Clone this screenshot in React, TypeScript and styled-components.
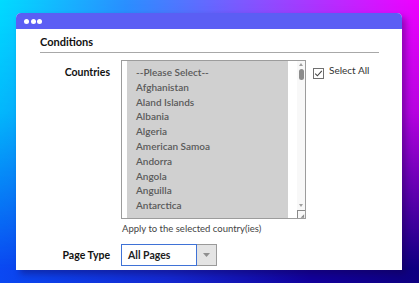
import styled, { createGlobalStyle } from "styled-components";

const GlobalStyle = createGlobalStyle`
    html, body {
        margin: 0;
        padding: 0;
    }
    body {
        font-family: Lato, "Noto Sans", sans-serif;
    }
`

const countries = [
    "--Please Select--",
    "Afghanistan",
    "Aland Islands",
    "Albania",
    "Algeria",
    "American Samoa",
    "Andorra",
    "Angola",
    "Anguilla",
    "Antarctica",
]

function App() {
    return (
        <>
            <GlobalStyle/>
            <Page>
                <Window>
                    <TitleBar>
                        <Dot/>
                        <Dot/>
                        <Dot/>
                    </TitleBar>
                    <Body>
                        <Heading>Conditions</Heading>
                        <Rule/>
                        <FormRow>
                            <Label $top={5}>Countries</Label>
                            <Field>
                                <ListRow>
                                    <ListBox>
                                        <Options>
                                            {countries.map((c) => (
                                                <Option key={c}>{c}</Option>
                                            ))}
                                        </Options>
                                        <ScrollTrack>
                                            <ArrowUp/>
                                            <Thumb/>
                                            <Spacer/>
                                            <ArrowDown/>
                                            <Resize>
                                                <svg width="8" height="8" viewBox="0 0 8 8">
                                                    <path d="M7 3 L7 7 L3 7 Z" fill="#8a8a8a"/>
                                                </svg>
                                            </Resize>
                                        </ScrollTrack>
                                    </ListBox>
                                    <CheckLabel>
                                        <CheckBox>
                                            <svg width="9" height="9" viewBox="0 0 9 9">
                                                <path d="M1.2 4.6 L3.4 6.8 L7.8 1.8" fill="none" stroke="#444" strokeWidth="1.1"/>
                                            </svg>
                                        </CheckBox>
                                        Select All
                                    </CheckLabel>
                                </ListRow>
                                <Help>Apply to the selected country(ies)</Help>
                            </Field>
                        </FormRow>
                        <FormRow $gap={9}>
                            <Label $top={4}>Page Type</Label>
                            <Dropdown>
                                <DropValue>All Pages</DropValue>
                                <DropButton>
                                    <svg width="7" height="4" viewBox="0 0 7 4">
                                        <path d="M0 0 L7 0 L3.5 4 Z" fill="#8f8f8f"/>
                                    </svg>
                                </DropButton>
                            </Dropdown>
                        </FormRow>
                    </Body>
                </Window>
            </Page>
        </>
    )
}

const Page = styled.div`
    position: relative;
    width: 419px;
    height: 283px;
    box-sizing: border-box;
    padding: 13px 17px 13px 16px;
    background: linear-gradient(to right, #0a48f2 0%, #1428d0 40%, #12009a 75%, #0e0080 100%);
    overflow: hidden;

    &::before {
        content: "";
        position: absolute;
        inset: 0;
        background: linear-gradient(to right, #00dcff 0%, #2a90ff 30%, #8a50ff 62%, #f000ff 100%);
        -webkit-mask-image: linear-gradient(to bottom, #000 0%, rgba(0, 0, 0, 0.75) 40%, rgba(0, 0, 0, 0) 95%);
        mask-image: linear-gradient(to bottom, #000 0%, rgba(0, 0, 0, 0.75) 40%, rgba(0, 0, 0, 0) 95%);
    }
`

const Window = styled.div`
    position: relative;
    z-index: 1;
    width: 386px;
    height: 257px;
    background: #fff;
    border-radius: 5px 5px 0 0;
    box-shadow: 4px 4px 6px rgba(20, 0, 60, 0.35);
    display: flex;
    flex-direction: column;
    overflow: hidden;
`

const TitleBar = styled.div`
    height: 16px;
    background: #5b5ef4;
    display: flex;
    align-items: center;
    gap: 1.5px;
    padding-left: 8px;
    padding-top: 1px;
    box-sizing: border-box;
`

const Dot = styled.span`
    width: 5px;
    height: 5px;
    border-radius: 50%;
    background: #fff;
`

const Body = styled.div`
    padding: 6px 23px 0 24px;
    display: flex;
    flex-direction: column;
`

const Heading = styled.div`
    font-size: 11px;
    font-weight: 700;
    color: #111;
    line-height: 14px;
`

const Rule = styled.div`
    height: 1px;
    background: #a8a8a8;
    margin-top: 3px;
    margin-bottom: 7px;
`

const FormRow = styled.div<{ $gap?: number }>`
    display: grid;
    grid-template-columns: 70px 1fr;
    column-gap: 11px;
    margin-top: ${(p) => p.$gap ?? 0}px;
`

const Label = styled.div<{ $top: number }>`
    text-align: right;
    font-size: 10.5px;
    font-weight: 700;
    color: #111;
    padding-top: ${(p) => p.$top}px;
    line-height: 14px;
`

const Field = styled.div`
    display: flex;
    flex-direction: column;
`

const ListRow = styled.div`
    display: flex;
    align-items: flex-start;
    gap: 7px;
`

const ListBox = styled.div`
    width: 185px;
    height: 159px;
    box-sizing: border-box;
    border: 1px solid #9c9c9c;
    display: flex;
    padding-left: 5px;
    background: #fff;
`

const Options = styled.div`
    width: 161px;
    background: #d0d0d0;
    padding: 4px 0 0 9px;
    box-sizing: border-box;
`

const Option = styled.div`
    font-size: 10px;
    font-weight: 600;
    color: #5a5a5a;
    line-height: 14.8px;
    white-space: nowrap;
`

const ScrollTrack = styled.div`
    margin-left: 9px;
    width: 8px;
    background: #f8f8f8;
    display: flex;
    flex-direction: column;
    align-items: center;
    padding-top: 2px;
`

const ArrowUp = styled.div`
    width: 0;
    height: 0;
    border-left: 2.5px solid transparent;
    border-right: 2.5px solid transparent;
    border-bottom: 3px solid #a0a0a0;
`

const ArrowDown = styled.div`
    width: 0;
    height: 0;
    border-left: 2.5px solid transparent;
    border-right: 2.5px solid transparent;
    border-top: 3px solid #a0a0a0;
    margin-bottom: 3px;
`

const Thumb = styled.div`
    width: 5px;
    height: 11px;
    border-radius: 3px;
    background: #8c8c8c;
    margin-top: 3px;
`

const Spacer = styled.div`
    flex: 1;
`

const Resize = styled.div`
    width: 8px;
    height: 8px;
    box-sizing: border-box;
    border-top: 1px solid #8a8a8a;
    border-left: 1px solid #8a8a8a;
    display: flex;
`

const CheckLabel = styled.label`
    display: flex;
    align-items: flex-start;
    gap: 5px;
    font-size: 10px;
    color: #333;
    line-height: 12px;
    padding-top: 4px;
`

const CheckBox = styled.span`
    width: 11px;
    height: 11px;
    box-sizing: border-box;
    border: 1px solid #707070;
    margin-top: 4px;
    display: flex;
    align-items: center;
    justify-content: center;
    background: #fff;
`

const Help = styled.div`
    font-size: 9.5px;
    color: #444;
    line-height: 12px;
    margin-top: 4px;
    margin-left: 1px;
`

const Dropdown = styled.div`
    display: flex;
    width: 96px;
    height: 22px;
`

const DropValue = styled.div`
    flex: 1;
    box-sizing: border-box;
    border: 1px solid #3f72d6;
    font-size: 10.5px;
    font-weight: 700;
    color: #222;
    padding-left: 6px;
    display: flex;
    align-items: center;
`

const DropButton = styled.div`
    width: 20px;
    box-sizing: border-box;
    border: 1px solid #9a9a9a;
    border-left: none;
    background: #e4e4e4;
    display: flex;
    align-items: center;
    justify-content: center;
`

export default App
